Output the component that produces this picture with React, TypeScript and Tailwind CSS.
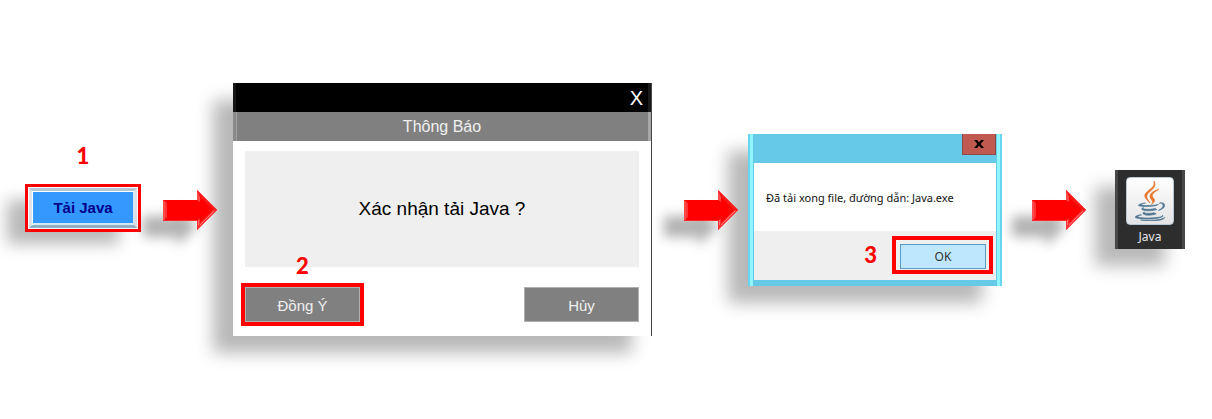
import type { ReactNode } from "react";

interface MarkerProps {
  children: ReactNode;
  className?: string;
}

function Marker({ children, className = "" }: MarkerProps) {
  return (
    <span
      className={`font-[Lato,sans-serif] text-[22px] leading-6 font-black text-[#ff0000] ${className}`}
    >
      {children}
    </span>
  );
}

function Arrow({ className }: { className: string }) {
  return (
    <svg
      viewBox="0 0 54 40"
      className={`relative z-10 h-10 w-[54px] shrink-0 drop-shadow-[-20px_16px_6px_rgba(0,0,0,0.3)] ${className}`}
      aria-hidden="true"
    >
      <path d="M0 10H34V0L54 20L34 40V31H0Z" fill="#ff0000" />
      <path d="M0 10L4 13V27L0 31Z" fill="#ff3434" />
      <path d="M54 20L34 40V31L37 28V33L50 20Z" fill="#ff3030" />
      <path d="M34 0L37 7L50 20H54Z" fill="#f81818" />
      <path d="M34 0V10L37 12V7Z" fill="#ff4a4a" />
      <path d="M35.5 35V30M37 35L51 21" stroke="#ff7070" strokeWidth="1" fill="none" />
      <path d="M1 11V30" stroke="#ff6060" strokeWidth="1" />
      <path d="M1 30.5H34" stroke="#ff2a2a" strokeWidth="1" />
    </svg>
  );
}

function DownloadStep() {
  return (
    <div className="relative w-[116px] shrink-0 pb-[3px]">
      <Marker className="absolute bottom-full left-0 mb-4 w-full text-center">1</Marker>
      <div className="border-3 border-[#ff0000] bg-white p-px shadow-[-20px_14px_16px_-2px_rgba(0,0,0,0.28)]">
        <button
          type="button"
          className="block h-10 w-full border-3 border-[#dce4ea] border-t-[#b4c6d4] border-b-[#8fb0c4] bg-[#3399ff] text-[15px] font-bold text-[#00008b] shadow-[inset_1px_1px_0_#ffffff,inset_-1px_-2px_0_#d5e8f6] font-['Liberation_Sans',Arial,sans-serif]"
        >
          Tải Java
        </button>
      </div>
    </div>
  );
}

function ConfirmDialog() {
  return (
    <section className="min-w-0 grow basis-[419px] border-r border-[#444] bg-white shadow-[-20px_17px_16px_rgba(0,0,0,0.28)] font-['Liberation_Sans',Arial,sans-serif]">
      <div className="flex h-[29px] items-center justify-end bg-black pr-2 shadow-[inset_3px_0_0_#151515,inset_-3px_0_0_#1a1a1a]">
        <button type="button" aria-label="Đóng" className="text-xl leading-6 text-white">
          X
        </button>
      </div>
      <h2 className="h-[29px] bg-[#808080] text-center text-base leading-[29px] text-[#f0f0f0] shadow-[inset_3px_0_0_#8a8a8a,inset_4px_0_0_#a0a0a0,inset_-3px_0_0_#a8a8a8]">
        Thông Báo
      </h2>
      <div className="px-3 pt-[10px] pb-[14px]">
        <p className="flex h-[116px] items-center justify-center bg-[#efefef] text-[19px] text-black">
          Xác nhận tải Java ?
        </p>
        <div className="mt-5 flex justify-between">
          <div className="relative">
            <Marker className="absolute bottom-full left-0 mb-[9px] w-full text-center">2</Marker>
            <button
              type="button"
              className="block h-[35px] w-[115px] border border-[#b0b0b0] bg-[#808080] pt-1 text-[15px] text-[#f0f0f0] outline-4 outline-[#ff0000]"
            >
              Đồng Ý
            </button>
          </div>
          <button
            type="button"
            className="h-[35px] w-[115px] border border-[#b0b0b0] bg-[#808080] pt-1 text-[15px] text-[#f0f0f0]"
          >
            Hủy
          </button>
        </div>
      </div>
    </section>
  );
}

function ResultDialog() {
  return (
    <section className="flex min-w-0 grow basis-[254px] flex-col bg-[#67c9e8] px-[6px] pb-[6px] shadow-[inset_2px_0_0_#67d4f0,inset_5px_0_0_#8ff6ff,inset_-2px_0_0_#67d4f0,inset_-5px_0_0_#8ff6ff,-20px_17px_16px_rgba(0,0,0,0.28)] font-['Noto_Sans',sans-serif]">
      <div className="flex h-[29px] justify-end">
        <button
          type="button"
          aria-label="Đóng"
          className="flex h-[21px] w-[34px] items-center justify-center border border-t-0 border-[#8a4a4a] bg-[#c0594f]"
        >
          <svg viewBox="0 0 10 8" className="h-2 w-[10px]" aria-hidden="true">
            <path d="M0 0H3L5 2.5L7 0H10L6.6 4L10 8H7L5 5.5L3 8H0L3.4 4Z" fill="#000000" />
          </svg>
        </button>
      </div>
      <p className="flex h-[68px] items-center bg-white pt-1 pl-3 text-[11px] whitespace-nowrap text-[#111]">
        Đã tải xong file, đường dẫn: Java.exe
      </p>
      <div className="flex h-[49px] items-center justify-end gap-[15px] bg-[#efefef] pr-[3px]">
        <Marker>3</Marker>
        <div className="border-4 border-[#ff0000] pt-1 pr-[3px] pb-px pl-1">
          <button
            type="button"
            className="block h-[25px] w-[86px] border border-[#5a9ac8] bg-[#bee6fd] text-xs text-[#333]"
          >
            OK
          </button>
        </div>
      </div>
    </section>
  );
}

function JavaShortcut() {
  return (
    <a
      href="#java"
      className="flex h-[79px] w-[70px] shrink-0 flex-col items-center border-x-3 border-[#474747] bg-[#2d2d2d] pt-[7px] shadow-[-20px_17px_16px_rgba(0,0,0,0.28)]"
    >
      <span className="flex h-12 w-12 items-center justify-center rounded border border-[#b8c8d4] bg-linear-to-b from-white to-[#e4e4e6]">
        <svg viewBox="0 0 384 512" className="h-10 w-[30px]" aria-hidden="true">
          <g fill="#e8762c" stroke="#e8762c" strokeWidth="8">
            <path d="M192.34 280.8c-19-42.7-83.1-80.2 0-145.8C296 53.2 242.84 0 242.84 0c21.5 84.5-75.6 110.1-110.7 162.6-23.9 35.9 11.7 74.4 60.2 118.2z" />
            <path d="M306.94 104.6c.1 0-175.2 43.8-91.5 140.2 24.7 28.4-6.5 54-6.5 54s62.7-32.4 33.9-72.9c-26.9-37.8-47.5-56.6 64.1-121.3z" />
          </g>
          <g fill="#4f7690" stroke="#4f7690" strokeWidth="8">
            <path d="M277.74 312.9c9.8-6.7 23.4-12.5 23.4-12.5s-38.7 7-77.2 10.2c-47.1 3.9-97.7 4.7-123.1 1.3-60.1-8 33-30.1 33-30.1s-36.1-2.4-80.6 19c-52.5 25.4 130 37 224.5 12.1z" />
            <path d="M300.84 375.1a12.19 12.19 0 0 1-2 2.6c128.3-33.7 81.1-118.9 19.8-97.3a17.33 17.33 0 0 0-8.2 6.3 70.45 70.45 0 0 1 11-3c31-6.5 75.5 41.5-20.6 91.4z" />
            <path d="M348 437.4s14.5 11.9-15.9 21.2c-57.9 17.5-240.8 22.8-291.6.7-18.3-7.9 16-19 26.8-21.3 11.2-2.4 17.7-2 17.7-2-20.3-14.3-131.3 28.1-56.4 40.2C232.84 509.4 401 461.3 348 437.4z" />
            <path d="M124.44 396c-78.7 22 47.9 67.4 148.1 24.5a185.89 185.89 0 0 1-28.2-13.8c-44.7 8.5-65.4 9.1-106 4.5-33.5-3.8-13.9-15.2-13.9-15.2z" />
            <path d="M304.24 493.2c-78.7 14.8-175.8 13.1-233.3 3.6 0-.1 11.8 9.7 72.4 13.6 92.2 5.9 233.8-3.3 237.1-46.9 0 0-6.4 16.5-76.2 29.7z" />
            <path d="M260.64 353c-59.2 11.4-93.5 11.1-136.8 6.6-33.5-3.5-11.6-19.7-11.6-19.7-86.8 28.8 48.2 61.4 169.5 25.9a60.37 60.37 0 0 1-21.1-12.8z" />
          </g>
        </svg>
      </span>
      <span className="mt-1 text-xs leading-4 text-[#e8e8e8] font-['Noto_Sans',sans-serif]">Java</span>
    </a>
  );
}

export default function App() {
  return (
    <main className="flex min-h-screen items-center bg-white pr-[27px] pl-[25px]">
      <DownloadStep />
      <Arrow className="mr-4 ml-[22px]" />
      <ConfirmDialog />
      <Arrow className="mr-[10px] ml-8" />
      <ResultDialog />
      <Arrow className="mr-[29px] ml-[30px]" />
      <JavaShortcut />
    </main>
  );
}
